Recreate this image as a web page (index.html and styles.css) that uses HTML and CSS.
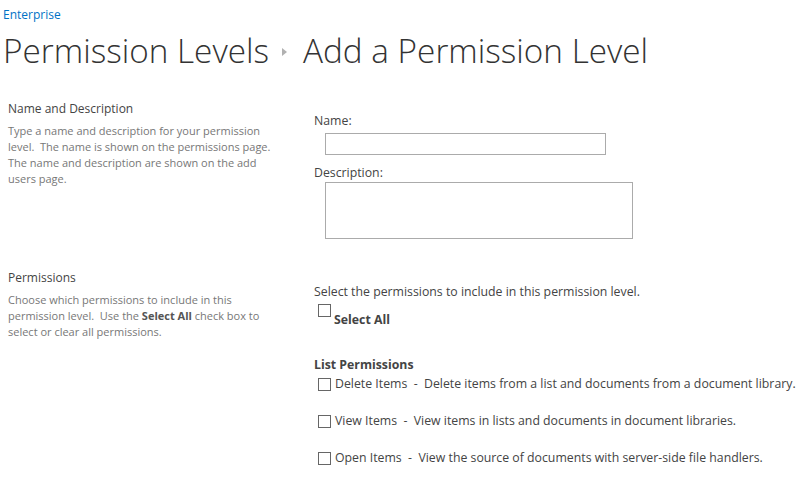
FILE: index.html
```html
<!DOCTYPE html>
<html>
<head>
<meta charset="utf-8">
<link rel="stylesheet" href="styles.css">
</head>
<body>
<div class="page">
  <div class="crumb"><a class="site" href="#">Enterprise</a></div>
  <h1 class="title"><span>Permission Levels</span><span class="sep"></span><span>Add a Permission Level</span></h1>

  <div class="section s1">
    <div class="left">
      <h3 class="sec-title">Name and Description</h3>
      <p class="sec-desc">Type a name and description for your permission level.&nbsp; The name is shown on the permissions page. The name and description are shown on the add users page.</p>
    </div>
    <div class="right">
      <div class="label">Name:</div>
      <div class="name-box"></div>
      <div class="label label2">Description:</div>
      <div class="desc-box"></div>
    </div>
  </div>

  <div class="section s2">
    <div class="left">
      <h3 class="sec-title">Permissions</h3>
      <p class="sec-desc">Choose which permissions to include in this permission level.&nbsp; Use the <strong class="em">Select All</strong> check box to select or clear all permissions.</p>
    </div>
    <div class="right">
      <div class="intro">Select the permissions to include in this permission level.</div>
      <div class="selall"><span class="cb"></span><span class="selall-text">Select All</span></div>
      <div class="group">List Permissions</div>
      <div class="perm"><span class="cb"></span><span>Delete Items&nbsp; -&nbsp; Delete items from a list and documents from a document library.</span></div>
      <div class="perm"><span class="cb"></span><span>View Items&nbsp; -&nbsp; View items in lists and documents in document libraries.</span></div>
      <div class="perm"><span class="cb"></span><span>Open Items&nbsp; -&nbsp; View the source of documents with server-side file handlers.</span></div>
    </div>
  </div>
</div>
</body>
</html>
```
FILE: styles.css
```css
html, body { margin: 0; padding: 0; background: #fff; }
body { font-family: "Segoe UI", "Open Sans", "Noto Sans", sans-serif; color: #444; overflow: hidden; }
.page { padding: 0 0 0 3px; }
.crumb { padding-top: 6px; height: 18px; font-size: 12px; line-height: 18px; }
.site { color: #0072c6; text-decoration: none; }
.title { margin: 2px 0 0; font-weight: 300; font-size: 33.3px; line-height: 48px; color: #333; display: flex; align-items: center; white-space: nowrap; }
.sep { width: 0; height: 0; border-left: 5px solid #b1b1b1; border-top: 4px solid transparent; border-bottom: 4px solid transparent; margin: 4px 16px 0 13px; }
.section { display: flex; }
.left { width: 306px; padding-left: 5px; box-sizing: border-box; }
.right { flex: 1; padding-left: 5px; }
.sec-title { margin: 0; font-weight: 400; font-size: 12px; line-height: 16px; color: #444; }
.sec-desc { margin: 6px 0 0; font-size: 11px; line-height: 16px; color: #777; width: 270px; }
.sec-desc .em { font-weight: 700; color: #555; line-height: 1; }
.s1 { margin-top: 27px; height: 169px; }
.s1 .right { padding-top: 12px; }
.label { font-size: 12.3px; line-height: 16px; color: #444; }
.name-box { margin: 4px 0 0 11px; width: 279px; height: 20px; border: 1px solid #ababab; }
.label2 { margin-top: 10px; }
.desc-box { margin: 1px 0 0 11px; width: 306px; height: 55px; border: 1px solid #ababab; }
.s2 .right { padding-top: 14px; }
.intro { font-size: 12.3px; line-height: 16px; white-space: nowrap; }
.selall { display: flex; align-items: flex-start; margin-top: 4px; height: 36px; }
.cb { display: inline-block; width: 11px; height: 11px; border: 1px solid #666; margin-left: 4px; margin-right: 4px; flex: none; }
.selall-text { font-weight: 700; font-size: 12.3px; line-height: 16px; margin-top: 8px; margin-left: -1px; }
.group { font-weight: 700; font-size: 12.3px; line-height: 16px; margin-top: 17px; }
.perm { display: flex; align-items: center; font-size: 12.3px; line-height: 16px; margin-top: 3px; margin-bottom: 21px; white-space: nowrap; }
.perm .cb { margin-right: 4px; }
```
